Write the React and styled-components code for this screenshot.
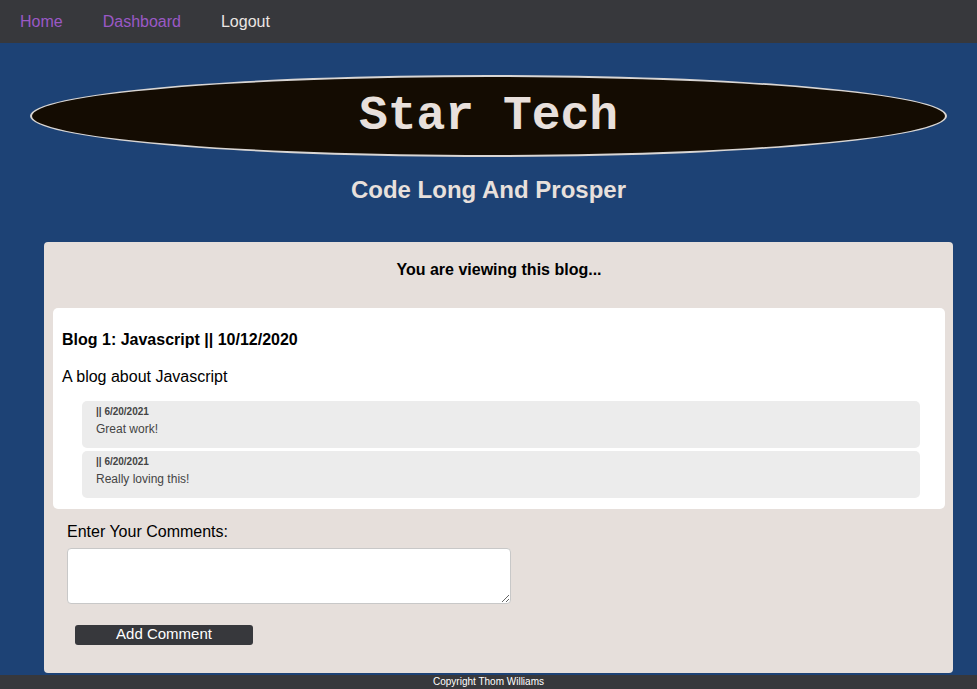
import React from 'react';
import styled, { createGlobalStyle } from 'styled-components';

const GlobalStyle = createGlobalStyle`
	* {
		box-sizing: border-box;
	}
	body {
		margin: 0;
		font-family: 'Liberation Sans', Arial, sans-serif;
		background-color: #1d4275;
	}
`;

const Nav = styled.nav`
	display: flex;
	align-items: center;
	height: 43px;
	background-color: #37383c;
`;
const NavLink = styled.a`
	padding: 0 20px;
	font-size: 16px;
	line-height: 18px;
	text-decoration: none;
	color: ${(props) => (props.light ? '#ebe6e3' : '#9b59c6')};
	cursor: pointer;
`;
const Main = styled.main`
	display: flex;
	flex-direction: column;
	align-items: center;
	padding: 32px 0 2px;
`;
const Banner = styled.div`
	display: flex;
	justify-content: center;
	align-items: center;
	width: 917px;
	height: 82px;
	border: 2px solid #d9d6d4;
	border-radius: 50%;
	background-color: #140c02;
`;
const Title = styled.h1`
	margin: 0;
	font-family: 'Liberation Mono', 'Courier New', monospace;
	font-size: 48px;
	font-weight: 700;
	color: #e8e0dc;
`;
const Subtitle = styled.h2`
	margin: 20px 0 0;
	font-size: 24px;
	line-height: 26px;
	font-weight: bold;
	color: #e8e0dc;
`;
const Card = styled.section`
	align-self: flex-start;
	width: 909px;
	margin: 39px 0 0 44px;
	padding: 19px 8px 28px 9px;
	background-color: #e6dfdb;
	border-radius: 4px;
`;
const CardTitle = styled.h3`
	margin: 0 0 29px;
	text-align: center;
	font-size: 16px;
	line-height: 18px;
	font-weight: bold;
	color: #000;
`;
const Post = styled.article`
	padding: 23px 9px 11px;
	background-color: #fff;
	border-radius: 5px;
`;
const PostTitle = styled.h4`
	margin: 0;
	font-size: 16px;
	line-height: 18px;
	font-weight: bold;
	color: #000;
`;
const PostBody = styled.p`
	margin: 19px 0 15px;
	font-size: 16px;
	line-height: 18px;
	color: #000;
`;
const CommentList = styled.div`
	display: flex;
	flex-direction: column;
	gap: 3px;
	margin: 0 16px 0 20px;
`;
const Comment = styled.div`
	padding: 5px 14px 12px;
	background-color: #ececec;
	border-radius: 5px;
`;
const CommentMeta = styled.div`
	font-size: 10px;
	line-height: 11px;
	font-weight: bold;
	color: #444;
`;
const CommentText = styled.div`
	margin-top: 5px;
	font-size: 12px;
	line-height: 14px;
	color: #444;
`;
const Form = styled.form`
	display: flex;
	flex-direction: column;
	align-items: flex-start;
	padding: 14px 14px 0;
`;
const Label = styled.label`
	font-size: 16px;
	line-height: 18px;
	color: #000;
`;
const TextArea = styled.textarea`
	width: 444px;
	height: 56px;
	margin-top: 7px;
	border: 1px solid #c8c8c8;
	border-radius: 4px;
	background-color: #fff;
	font-family: inherit;
`;
const Button = styled.button`
	width: 178px;
	height: 20px;
	margin: 21px 0 0 8px;
	padding: 0 0 3px;
	border: none;
	border-radius: 3px;
	background-color: #37383c;
	color: #fff;
	font-family: 'Liberation Sans', Arial, sans-serif;
	font-size: 15px;
	line-height: 17px;
`;
const Footer = styled.footer`
	height: 14px;
	background-color: #37383c;
	color: #fff;
	text-align: center;
	font-size: 10px;
	line-height: 14px;
`;

const comments = [
	{ date: '6/20/2021', text: 'Great work!' },
	{ date: '6/20/2021', text: 'Really loving this!' },
];

const App = () => {
	return (
		<>
			<GlobalStyle />
			<Nav>
				<NavLink>Home</NavLink>
				<NavLink>Dashboard</NavLink>
				<NavLink light>Logout</NavLink>
			</Nav>
			<Main>
				<Banner>
					<Title>Star Tech</Title>
				</Banner>
				<Subtitle>Code Long And Prosper</Subtitle>
				<Card>
					<CardTitle>You are viewing this blog...</CardTitle>
					<Post>
						<PostTitle>Blog 1: Javascript || 10/12/2020</PostTitle>
						<PostBody>A blog about Javascript</PostBody>
						<CommentList>
							{comments.map((c, i) => (
								<Comment key={i}>
									<CommentMeta>|| {c.date}</CommentMeta>
									<CommentText>{c.text}</CommentText>
								</Comment>
							))}
						</CommentList>
					</Post>
					<Form onSubmit={(e) => e.preventDefault()}>
						<Label>Enter Your Comments:</Label>
						<TextArea />
						<Button type="submit">Add Comment</Button>
					</Form>
				</Card>
			</Main>
			<Footer>Copyright Thom Williams</Footer>
		</>
	);
};

export default App;
